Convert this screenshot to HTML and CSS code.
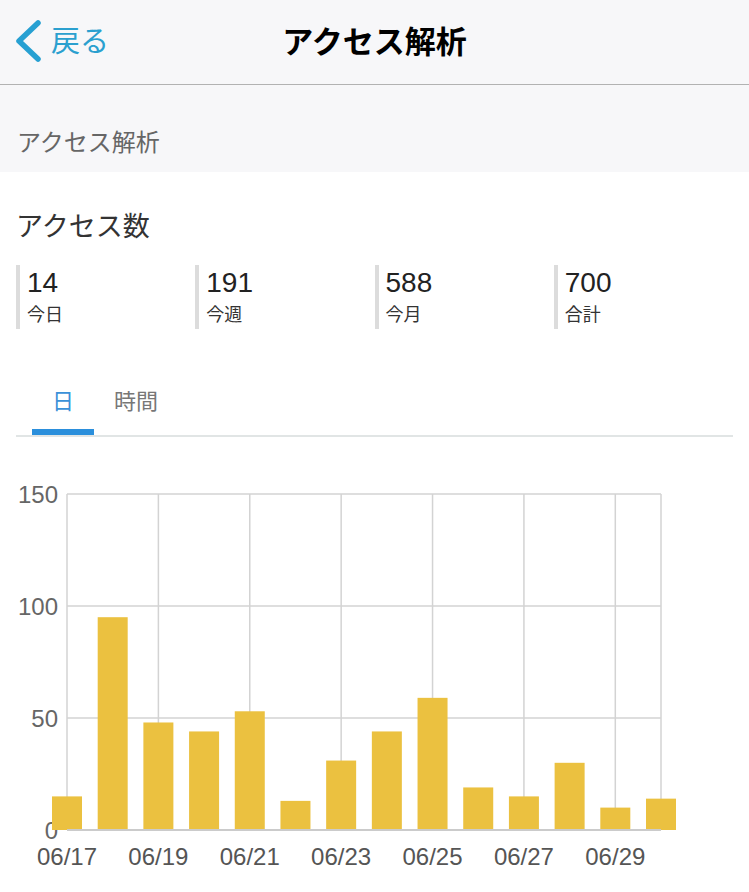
FILE: index.html
```html
<!DOCTYPE html>
<html lang="ja">
<head>
    <meta charset="utf-8">
    <title>アクセス解析</title>
    <link rel="stylesheet" href="styles.css">
</head>
<body>
    <header class="navbar">
        <a href="#" class="back">
            <svg class="back-icon" width="26" height="44" viewBox="0 0 26 44">
                <polyline points="22,3 3,21 22,39" />
            </svg>
            <span>戻る</span>
        </a>
        <h1 class="title">アクセス解析</h1>
        <div></div>
    </header>

    <div class="section-head">アクセス解析</div>

    <div class="card">
        <h2>アクセス数</h2>
        <div class="stats">
            <div class="stat"><div class="stat-num">14</div><div class="stat-label">今日</div></div>
            <div class="stat"><div class="stat-num">191</div><div class="stat-label">今週</div></div>
            <div class="stat"><div class="stat-num">588</div><div class="stat-label">今月</div></div>
            <div class="stat"><div class="stat-num">700</div><div class="stat-label">合計</div></div>
        </div>

        <div class="tabs">
            <div class="tab active">日</div>
            <div class="tab">時間</div>
        </div>

        <svg id="chart" class="chart" width="749" height="422" viewBox="0 0 749 422"></svg>
    </div>

    <script>
        const days = ['06/17','06/18','06/19','06/20','06/21','06/22','06/23','06/24','06/25','06/26','06/27','06/28','06/29','06/30'];
        const counts = [15, 95, 48, 44, 53, 13, 31, 44, 59, 19, 15, 30, 10, 14];

        const NS = 'http://www.w3.org/2000/svg';
        const chart = document.getElementById('chart');
        const plotLeft = 67, plotRight = 661, plotTop = 25, plotBottom = 361, maxY = 150;
        const step = (plotRight - plotLeft) / (days.length - 1);
        const scale = (plotBottom - plotTop) / maxY;

        function add(tag, attrs, text) {
            const el = document.createElementNS(NS, tag);
            for (const k in attrs) el.setAttribute(k, attrs[k]);
            if (text) el.textContent = text;
            chart.appendChild(el);
            return el;
        }

        // horizontal grid + y labels
        [0, 50, 100, 150].forEach(v => {
            const y = plotBottom - v * scale;
            add('line', { x1: plotLeft, x2: plotRight, y1: y, y2: y, class: 'grid' });
            add('text', { x: 58, y: y + 8.5, 'text-anchor': 'end', class: 'axis-label' }, String(v));
        });

        // vertical grid every other day, plus the right edge
        days.forEach((d, i) => {
            const x = plotLeft + i * step;
            if (i % 2 === 0 || i === days.length - 1) {
                add('line', { x1: x, x2: x, y1: plotTop, y2: plotBottom, class: 'grid' });
            }
        });

        // bars
        counts.forEach((c, i) => {
            const x = plotLeft + i * step;
            const h = c * scale;
            add('rect', { x: x - 15, y: plotBottom - h, width: 30, height: h, class: 'bar' });
        });

        add('line', { x1: plotLeft, x2: plotRight, y1: plotBottom, y2: plotBottom, class: 'axis' });

        // x labels
        days.forEach((d, i) => {
            if (i % 2 === 0) {
                add('text', { x: plotLeft + i * step, y: 396, 'text-anchor': 'middle', class: 'axis-label date' }, d);
            }
        });
    </script>
</body>
</html>
```

FILE: styles.css
```css
body {
    margin: 0;
    font-family: "Liberation Sans", "Noto Sans CJK JP", sans-serif;
    background-color: #fff;
    color: #333;
}
.navbar {
    height: 84px;
    background-color: #f7f7f9;
    border-bottom: 1px solid #b2b2b2;
    display: grid;
    grid-template-columns: 1fr auto 1fr;
    align-items: center;
}
.back {
    display: flex;
    align-items: center;
    gap: 9px;
    padding-left: 16px;
    color: #2ba0cf;
    font-size: 29px;
    line-height: 1;
    text-decoration: none;
}
.back-icon polyline {
    fill: none;
    stroke: #27a0d2;
    stroke-width: 5.5;
    stroke-linecap: round;
    stroke-linejoin: round;
}
.title {
    margin: 0;
    font-size: 31px;
    font-weight: bold;
    line-height: 1;
    color: #000;
}
.section-head {
    box-sizing: border-box;
    height: 87px;
    padding: 46px 17px 0;
    background-color: #f7f7f9;
    color: #666;
    font-size: 24px;
    line-height: 1;
}
.card {
    padding: 0 16px;
}
.card h2 {
    margin: 0;
    padding-top: 42px;
    font-size: 27px;
    font-weight: normal;
    line-height: 1;
    color: #333;
}
.stats {
    display: grid;
    grid-template-columns: repeat(4, 1fr);
    margin-top: 24px;
}
.stat {
    height: 64px;
    box-sizing: border-box;
    border-left: 4px solid #dcdcdc;
    padding: 4px 0 0 7px;
}
.stat-num {
    font-size: 28px;
    line-height: 1;
    color: #222;
}
.stat-label {
    margin-top: 9px;
    font-size: 18px;
    line-height: 1;
    color: #333;
}
.tabs {
    display: flex;
    margin-top: 62px;
    padding-left: 16px;
    border-bottom: 2px solid #e1e5e5;
}
.tab {
    padding: 0 20px 16px;
    border-bottom: 6px solid transparent;
    font-size: 22px;
    line-height: 1;
    color: #777;
}
.tab.active {
    color: #3b91d8;
    border-bottom-color: #2b8fdc;
}
.chart {
    display: block;
    margin: 32px -16px 0;
}
.chart .grid {
    stroke: #d3d3d3;
    stroke-width: 1.5;
}
.chart .axis {
    stroke: #cbcbcb;
    stroke-width: 2;
}
.chart .bar {
    fill: #ebc140;
}
.chart .axis-label {
    font-family: "Liberation Sans", sans-serif;
    font-size: 24px;
    fill: #666;
}
.chart .date {
    fill: #555;
}
```
